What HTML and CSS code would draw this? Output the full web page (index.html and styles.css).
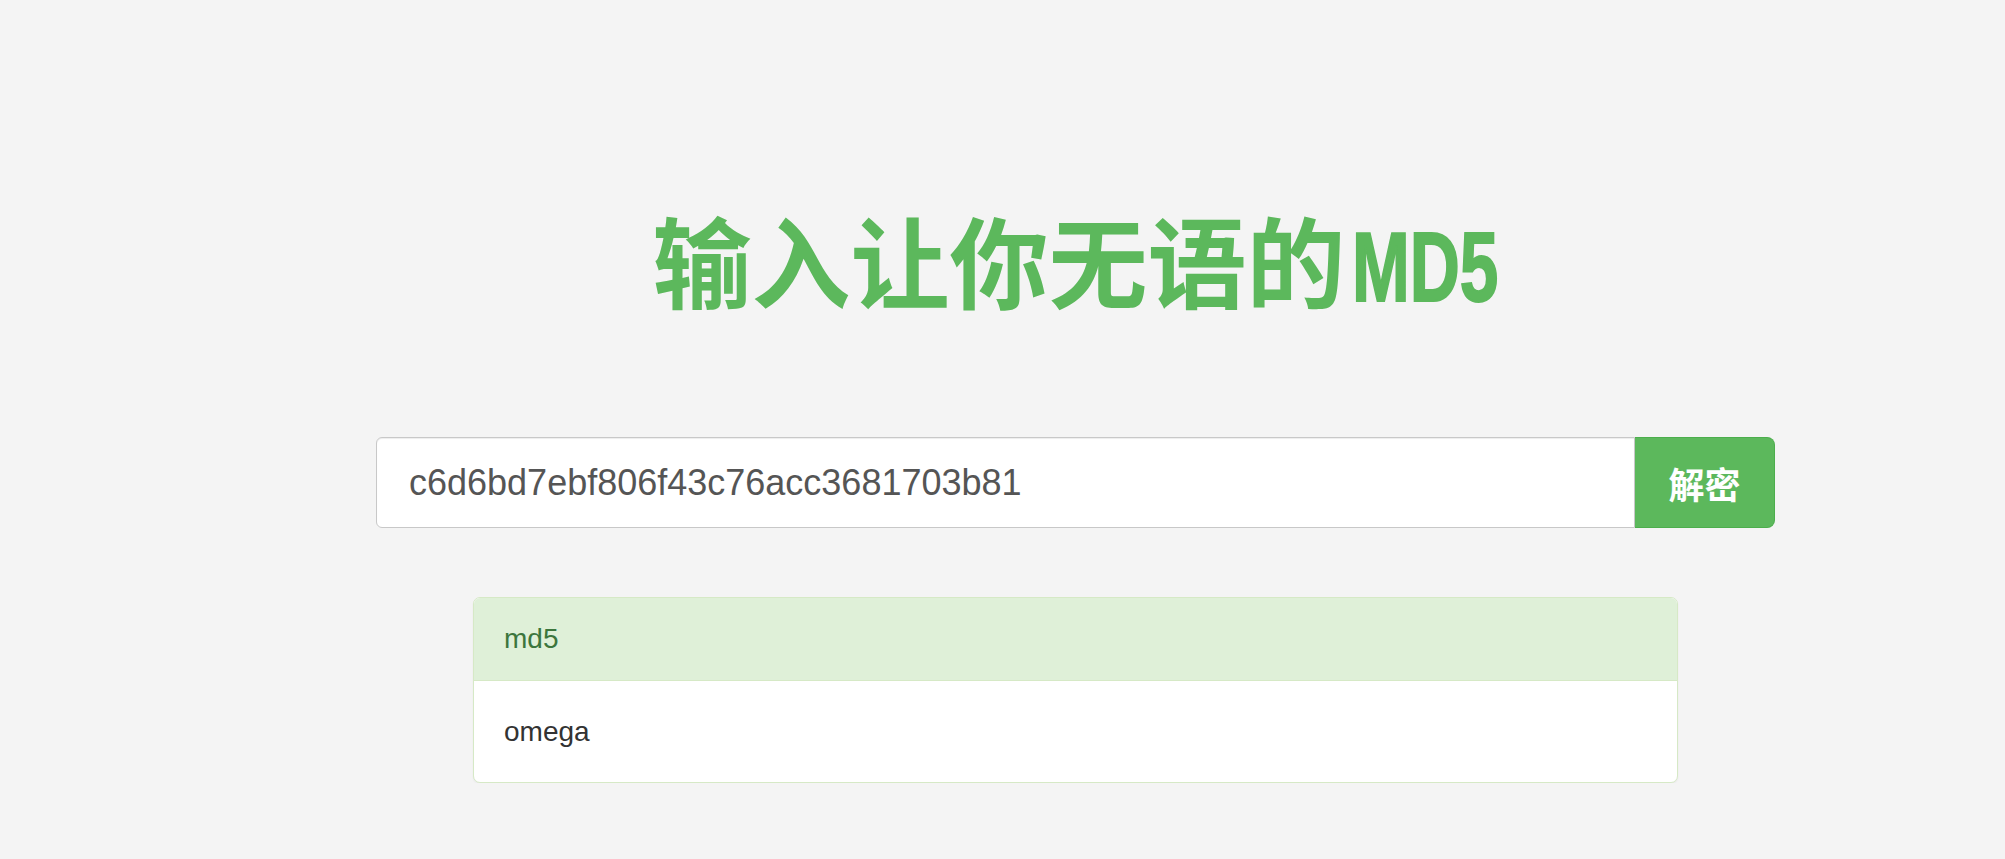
FILE: index.html
```html
<!DOCTYPE html>
<html lang="zh-CN">
<head>
    <meta charset="UTF-8">
    <title>输入让你无语的MD5</title>
    <meta name="viewport" content="width=device-width">
    <link rel="stylesheet" href="styles.css">
</head>
<body>
    <div class="main">
        <h1 class="title">输入让你无语的<span class="title-latin">MD5</span></h1>

        <form class="search" action="#" method="post">
            <input class="search-input" type="text" name="md5" value="c6d6bd7ebf806f43c76acc3681703b81">
            <button class="search-button" type="submit">解密</button>
        </form>

        <div class="panel">
            <div class="panel-heading">md5</div>
            <div class="panel-body">omega</div>
        </div>
    </div>
</body>
</html>
```

FILE: styles.css
```css
*,
*::after,
*::before{
    padding: 0;
    margin: 0;
    box-sizing: border-box;
}
html{
    font: normal 28px/1.4 "Liberation Sans", Arial, sans-serif;
    color: #333;
}
body{
    background-color: #f4f4f4;
}
.main{
    width: 1399px;
    margin-left: 376px;
    padding-top: 193px;
}
.title{
    text-align: center;
    height: 130px;
    line-height: 130px;
    font-family: "Noto Sans CJK SC", sans-serif;
    font-weight: bold;
    font-size: 99px;
    color: #5cb85c;
    white-space: nowrap;
}
.title-latin{
    display: inline-block;
    font-family: "Liberation Sans", Arial, sans-serif;
    font-weight: bold;
    margin-left: 7px;
    margin-right: -63px;
    transform: scaleX(0.7);
    transform-origin: left center;
    -webkit-text-stroke: 2px #5cb85c;
}
.search{
    display: flex;
    height: 91px;
    margin-top: 114px;
}
.search-input{
    flex: 1;
    height: 100%;
    padding: 0 32px;
    font: normal 36px "Liberation Sans", Arial, sans-serif;
    color: #555;
    background: #fff;
    border: 1px solid #c8c8c8;
    border-radius: 6px 0 0 6px;
    box-shadow: inset 0 1px 1px rgba(0, 0, 0, 0.075);
    outline: none;
}
.search-button{
    width: 140px;
    height: 100%;
    font: bold 36px "Noto Sans CJK SC", sans-serif;
    color: #fff;
    background-color: #5cb85c;
    border: 1px solid #4cae4c;
    border-left: none;
    border-radius: 0 8px 8px 0;
    cursor: pointer;
}
.panel{
    margin: 69px 97px 0;
    background: #fff;
    border: 1px solid #d6e9c6;
    border-radius: 7px;
    box-shadow: 0 1px 2px rgba(0, 0, 0, 0.05);
    overflow: hidden;
}
.panel-heading{
    height: 83px;
    display: flex;
    align-items: center;
    padding: 0 30px;
    color: #3c763d;
    background-color: #dff0d8;
    border-bottom: 1px solid #d6e9c6;
}
.panel-body{
    height: 101px;
    display: flex;
    align-items: center;
    padding: 0 30px;
}
```
